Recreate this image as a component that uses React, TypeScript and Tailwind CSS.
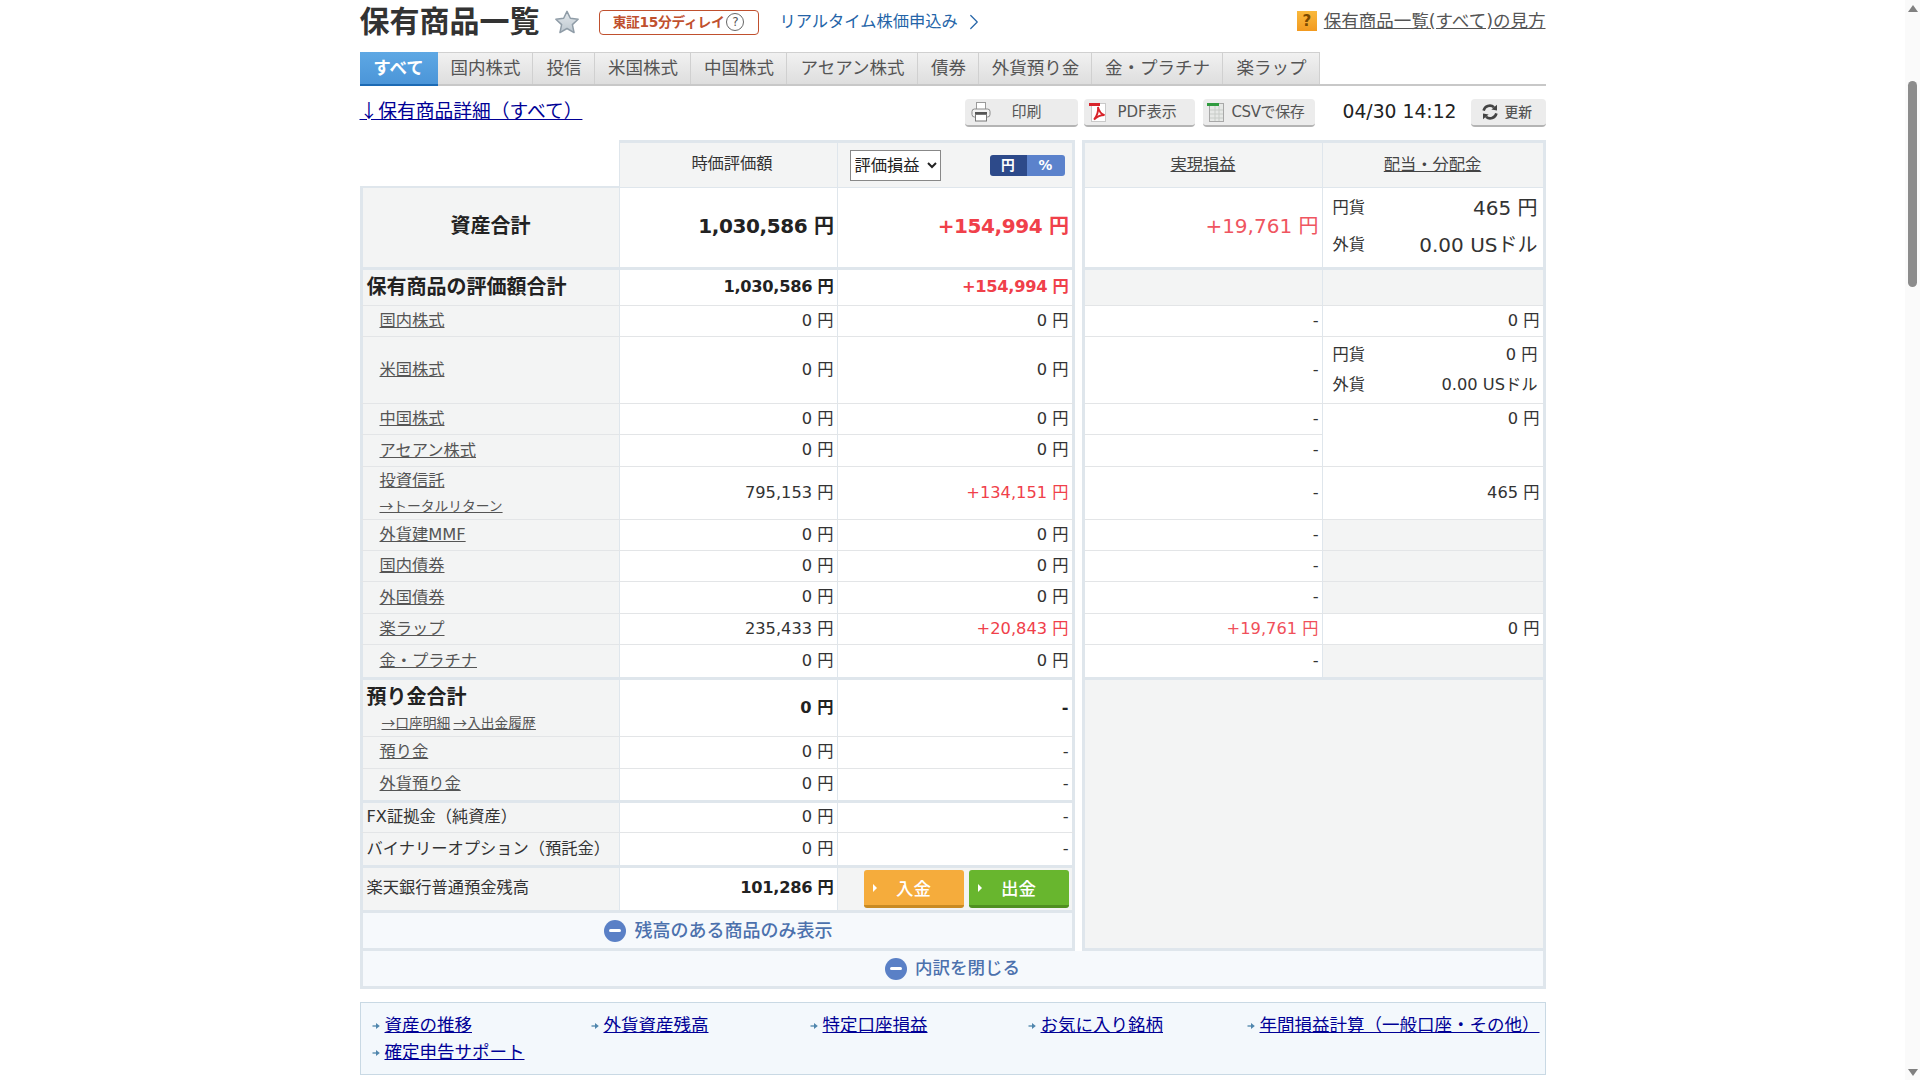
import React from "react";
import { ChevronRight } from "lucide-react";

// Data
const tabs = [
  { name: "すべて", width: "w-[78px]" },
  { name: "国内株式", width: "w-[95px]" },
  { name: "投信", width: "w-[62px]" },
  { name: "米国株式", width: "w-[96px]" },
  { name: "中国株式", width: "w-[96px]" },
  { name: "アセアン株式", width: "w-[131px]" },
  { name: "債券", width: "w-[61px]" },
  { name: "外貨預り金", width: "w-[113px]" },
  { name: "金・プラチナ", width: "w-[131px]" },
  { name: "楽ラップ", width: "w-[97px]" },
];

type HoldingRow = { label: string; height: string; value: string; loss: string; red?: boolean; end?: boolean };

const holdings: HoldingRow[] = [
  { label: "国内株式", height: "h-[31px]", value: "0 円", loss: "0 円" },
  { label: "米国株式", height: "h-[67px]", value: "0 円", loss: "0 円" },
  { label: "中国株式", height: "h-[31px]", value: "0 円", loss: "0 円" },
  { label: "アセアン株式", height: "h-[32px]", value: "0 円", loss: "0 円" },
  { label: "投資信託", height: "h-[53px]", value: "795,153 円", loss: "+134,151 円", red: true },
  { label: "外貨建MMF", height: "h-[31px]", value: "0 円", loss: "0 円" },
  { label: "国内債券", height: "h-[31px]", value: "0 円", loss: "0 円" },
  { label: "外国債券", height: "h-[32px]", value: "0 円", loss: "0 円" },
  { label: "楽ラップ", height: "h-[31px]", value: "235,433 円", loss: "+20,843 円", red: true },
  { label: "金・プラチナ", height: "h-[35px]", value: "0 円", loss: "0 円", end: true },
];

const footerLinks = ["資産の推移", "外貨資産残高", "特定口座損益", "お気に入り銘柄", "年間損益計算（一般口座・その他）", "確定申告サポート"];

const band = "border-[#dfe6ec]";
const gray = "bg-[#f3f4f4]";
const cjk = "font-['Noto_Sans_CJK_JP',sans-serif]";

const StarIcon = () => (
  <svg width="26" height="26" viewBox="0 0 28 28">
    <defs>
      <linearGradient id="star" x1="0" y1="0" x2="0" y2="1">
        <stop offset="0" stopColor="#e4e9ed" />
        <stop offset="1" stopColor="#bcc6ce" />
      </linearGradient>
    </defs>
    <polygon
      points="14,2.5 17.6,10 26,11 19.8,16.8 21.6,25.4 14,21 6.4,25.4 8.2,16.8 2,11 10.4,10"
      fill="url(#star)"
      stroke="#8f9ca7"
      strokeWidth="1.6"
      strokeLinejoin="round"
    />
  </svg>
);

const PrinterIcon = () => (
  <svg width="20" height="22" viewBox="0 0 20 22">
    <rect x="5.5" y="1.5" width="9" height="7" fill="#fff" stroke="#9a9a9a" />
    <rect x="1" y="8" width="18" height="8" rx="2.5" fill="#f2f2f2" stroke="#8a8a8a" />
    <rect x="4" y="11" width="12" height="2.5" fill="#555" />
    <rect x="4.5" y="13.5" width="11" height="6.5" fill="#fff" stroke="#777" />
  </svg>
);

const PdfIcon = () => (
  <svg width="18" height="22" viewBox="0 0 18 22">
    <rect x="2.5" y="2.5" width="14" height="18" fill="#fff" stroke="#c9c9c9" />
    <rect x="0" y="2" width="11" height="3" fill="#d8232a" />
    <path d="M5 18.5 C8 15 9.5 11 9 6 C10 10.5 12 13 15.5 14 C11.5 14 8 15.5 5 18.5 Z" fill="none" stroke="#d8232a" strokeWidth="1.8" />
  </svg>
);

const CsvIcon = () => (
  <svg width="18" height="22" viewBox="0 0 18 22">
    <rect x="2.5" y="2.5" width="14" height="18" fill="#e6e8e6" stroke="#a8a8a8" />
    <rect x="0" y="2" width="12" height="3" fill="#2f9b3f" />
    <path d="M3 9h13M3 13h13M3 17h13M8 5v15M12 5v15" stroke="#c8ccc8" strokeWidth="1" />
  </svg>
);

const RefreshIcon = () => (
  <svg width="18" height="18" viewBox="0 0 18 18">
    <g fill="none" stroke="#444" strokeWidth="2.6">
      <path d="M2.6 7.6 A6.4 6.4 0 0 1 13 4.2" />
      <path d="M15.4 10.4 A6.4 6.4 0 0 1 5 13.8" />
    </g>
    <polygon points="16,1.8 16,7.6 10.4,6.6" fill="#444" />
    <polygon points="2,16.2 2,10.4 7.6,11.4" fill="#444" />
  </svg>
);

const LinkArrow = () => (
  <svg width="8" height="8" viewBox="0 0 8 8" className="mr-[5px] shrink-0">
    <path d="M0.5 4h4.5" stroke="#6c9ab8" strokeWidth="1.6" />
    <polygon points="4,1 7.8,4 4,7" fill="#4f86ad" />
  </svg>
);

const MinusCircle = () => (
  <span className="w-[22px] h-[22px] rounded-full bg-[#5a80c6] flex items-center justify-center">
    <span className="w-[12px] h-[3px] bg-white rounded-sm" />
  </span>
);

const ToolButton = ({ width, children }: { width: string; children: React.ReactNode }) => (
  <button
    className={`${width} h-[28px] flex items-center rounded-[4px] border-b-[2px] border-[#b4b4b4] bg-[#ececec] text-[15px] text-[#555]`}
  >
    {children}
  </button>
);

const SubLabel = ({ row }: { row: HoldingRow }) => (
  <div className="flex flex-col pl-[17px] text-[16.25px] text-[#555] leading-[24px]">
    <a className="underline">{row.label}</a>
    {row.label === "投資信託" && <a className={`underline text-[13.75px] ${cjk}`}>→トータルリターン</a>}
  </div>
);

// One row of the left half: label, market value, gain or loss
const LeftRow = ({
  height,
  label,
  value,
  loss,
  labelClass = "",
  cellClass = "text-[16.25px] text-[#333]",
  lossClass = "",
  bandBottom = false,
}: {
  height: string;
  label: React.ReactNode;
  value: React.ReactNode;
  loss: React.ReactNode;
  labelClass?: string;
  cellClass?: string;
  lossClass?: string;
  bandBottom?: boolean;
}) => (
  <div className={`${height} flex border-l-[3px] border-r-[3px] ${band} ${bandBottom ? "border-b-[3px]" : "border-b border-b-[#e3e5e7]"}`}>
    <div className={`w-[256px] flex items-center ${gray} ${labelClass}`}>{label}</div>
    <div className={`w-[218px] flex items-center justify-end pr-[3px] border-l ${band} ${cellClass}`}>{value}</div>
    <div className={`flex-1 flex items-center justify-end pr-[3px] border-l ${band} ${cellClass} ${lossClass}`}>{loss}</div>
  </div>
);

const RightCell = ({ children, className = "" }: { children?: React.ReactNode; className?: string }) => (
  <div className={`flex items-center justify-end pr-[3px] text-[16.25px] text-[#333] ${className}`}>{children}</div>
);

const CurrencyLine = ({ name, amount, big }: { name: string; amount: string; big?: boolean }) => (
  <div className="flex items-center justify-between pl-[10px] pr-[5px]">
    <span className="text-[16.25px] text-[#333]">{name}</span>
    <span className={big ? "text-[20px] text-[#333]" : "text-[16.25px] text-[#333]"}>{amount}</span>
  </div>
);

const App = () => {
  return (
    <div className="flex h-screen overflow-hidden bg-white font-['DejaVu_Sans','Noto_Sans_CJK_JP',sans-serif]">
      <div className="flex-1 min-w-0">
        <div className="w-[1186px] mx-auto">
          {/* Title */}
          <div className="h-[52px] flex items-start justify-between">
            <div className="flex items-center h-[44px]">
              <h1 className="text-[30px] font-bold text-[#333] leading-none">保有商品一覧</h1>
              <span className="ml-[14px] flex">
                <StarIcon />
              </span>
              <span className="ml-[19px] w-[160px] h-[25px] flex items-center justify-center gap-[2px] rounded-[4px] border border-[#c0502e] text-[13.75px] font-bold text-[#c0502e] tracking-[-0.3px]">
                東証15分ディレイ
                <span className="w-[18px] h-[18px] rounded-full border-[1.5px] border-[#666] flex items-center justify-center text-[12px] font-normal text-[#555]">?</span>
              </span>
              <a className="ml-[21px] text-[16.25px] text-[#2464a8]">リアルタイム株価申込み</a>
              <ChevronRight className="ml-[3px] w-[26px] h-[26px] text-[#2464a8]" strokeWidth={1.1} />
            </div>
            <div className="flex items-center h-[42px]">
              <span className="w-[20px] h-[20px] bg-linear-to-b from-[#f9b93c] to-[#f29a1f] flex items-center justify-center text-[15px] font-bold text-[#7a4a00]">?</span>
              <a className="ml-[7px] text-[17.5px] text-[#555] underline">保有商品一覧(すべて)の見方</a>
            </div>
          </div>

          {/* Tabs */}
          <div className="flex h-[34px] border-b-[2px] border-[#c8c8c8]">
            {tabs.map((tab, idx) => (
              <div
                key={tab.name}
                className={
                  idx === 0
                    ? `${tab.width} flex items-center justify-center bg-linear-to-b from-[#5ea8e4] to-[#4b95d8] border-b-[2px] -mb-[2px] border-[#1c6ab4] text-[17.5px] font-bold text-white`
                    : `${tab.width} flex items-center justify-center pl-[2px] bg-linear-to-b from-[#f1f1f1] to-[#dedede] border-t border-r border-[#d0d0d0] text-[17.5px] text-[#555]`
                }
              >
                {tab.name}
              </div>
            ))}
          </div>

          {/* Toolbar */}
          <div className="h-[54px] flex items-start">
            <a className={`mt-[10px] text-[18.75px] leading-[28px] text-[#000096] underline ${cjk}`}>↓保有商品詳細（すべて）</a>
            <div className="ml-auto mt-[13px] flex items-center">
              <ToolButton width="w-[113px]">
                <span className="ml-[6px] flex"><PrinterIcon /></span>
                <span className="ml-[21px]">印刷</span>
              </ToolButton>
              <span className="w-[6px]" />
              <ToolButton width="w-[111px]">
                <span className="ml-[5px] flex"><PdfIcon /></span>
                <span className="ml-[11px]">PDF表示</span>
              </ToolButton>
              <span className="w-[8px]" />
              <ToolButton width="w-[112px]">
                <span className="ml-[4px] flex"><CsvIcon /></span>
                <span className="ml-[7px] tracking-[-0.4px]">CSVで保存</span>
              </ToolButton>
              <span className="w-[28px] " />
              <span className="w-[115px] text-[18.75px] leading-[24px] -mt-[3px] text-[#222] whitespace-nowrap">04/30 14:12</span>
              <span className="w-[13px]" />
              <ToolButton width="w-[75px]">
                <span className="ml-[10px] flex"><RefreshIcon /></span>
                <span className="ml-[6px] text-[13.75px] font-medium">更新</span>
              </ToolButton>
            </div>
          </div>

          {/* Main table */}
          <div className="flex">
            <div className="w-[715px] flex flex-col">
              {/* Header */}
              <div className="h-[48px] flex">
                <div className={`w-[259px] border-b-[2px] ${band}`} />
                <div className={`flex-1 flex border-t-[3px] border-r-[3px] border-b ${band} ${gray}`}>
                  <div className={`w-[218px] flex items-center justify-center pl-[8px] pb-[1px] border-l ${band} text-[16.25px] text-[#333]`}>時価評価額</div>
                  <div className={`flex-1 flex items-center border-l ${band} pl-[12px]`}>
                    <select className="w-[91px] h-[31px] border border-[#888] bg-white text-[16.25px] text-[#222]">
                      <option>評価損益</option>
                    </select>
                    <div className="ml-[49px] w-[75px] h-[21px] flex rounded-[3px] overflow-hidden text-[13.75px] font-bold text-white">
                      <span className="w-[37px] flex items-center justify-center bg-[#2d4a8a]">円</span>
                      <span className="flex-1 flex items-center justify-center bg-[#5b82cc]">%</span>
                    </div>
                  </div>
                </div>
              </div>

              <LeftRow
                height="h-[82px]"
                bandBottom
                label={<span className="w-full text-center pb-[3px] text-[20px] font-bold text-[#222]">資産合計</span>}
                value={<span className="pb-[4px]">1,030,586 円</span>}
                loss={<span className="pb-[4px]">+154,994 円</span>}
                cellClass="text-[20px] font-bold text-[#222] tracking-[-0.4px]"
                lossClass="text-[#f0404a]"
              />
              <LeftRow
                height="h-[36px]"
                label={<span className="pl-[4px] pb-[2px] text-[20px] font-bold text-[#222]">保有商品の評価額合計</span>}
                value="1,030,586 円"
                loss="+154,994 円"
                cellClass="text-[16.25px] font-bold text-[#222] tracking-[-0.3px]"
                lossClass="text-[#f0404a]"
              />
              {holdings.map((row) => (
                <LeftRow
                  key={row.label}
                  height={row.height}
                  bandBottom={row.end}
                  label={<SubLabel row={row} />}
                  value={row.value}
                  loss={row.loss}
                  lossClass={row.red ? "text-[#f0404a]" : ""}
                />
              ))}
              <LeftRow
                height="h-[57px]"
                label={
                  <div className="pl-[4px] flex flex-col">
                    <span className="text-[20px] font-bold text-[#222] leading-[30px] -mt-[2px]">預り金合計</span>
                    <span className={`pl-[15px] text-[13.75px] text-[#555] leading-[20px] ${cjk}`}>
                      <a className="underline">→口座明細</a> <a className="underline">→入出金履歴</a>
                    </span>
                  </div>
                }
                value="0 円"
                loss="-"
                cellClass="text-[16.25px] font-bold text-[#222]"
              />
              <LeftRow height="h-[32px]" label={<a className="pl-[17px] text-[16.25px] text-[#555] underline">預り金</a>} value="0 円" loss="-" />
              <LeftRow height="h-[34px]" bandBottom label={<a className="pl-[17px] text-[16.25px] text-[#555] underline">外貨預り金</a>} value="0 円" loss="-" />
              <LeftRow height="h-[30px]" label={<span className="pl-[4px] text-[16.25px] text-[#333]">FX証拠金（純資産）</span>} value="0 円" loss="-" />
              <LeftRow height="h-[35px]" bandBottom label={<span className="pl-[4px] text-[16.25px] text-[#333]">バイナリーオプション（預託金）</span>} value="0 円" loss="-" />

              {/* Bank balance */}
              <div className={`h-[45px] flex border-l-[3px] border-r-[3px] border-b-[3px] ${band}`}>
                <div className={`w-[256px] flex items-center pl-[4px] pb-[2px] ${gray} text-[16.25px] text-[#333]`}>楽天銀行普通預金残高</div>
                <div className={`w-[218px] flex items-center justify-end pr-[3px] pb-[2px] border-l ${band} text-[16.25px] font-bold text-[#222] tracking-[-0.3px]`}>101,286 円</div>
                <div className={`flex-1 flex items-center justify-end gap-[5px] pr-[3px] border-l ${band} ${gray}`}>
                  <button className="relative w-[100px] h-[38px] pt-[3px] rounded-[3px] border-b-[3px] border-[#c98a22] bg-[#f5ac3c] text-[17.5px] font-medium text-white">
                    <span className="absolute left-[9px] top-[14px] border-y-[4px] border-l-[4px] border-y-transparent border-l-white" />
                    入金
                  </button>
                  <button className="relative w-[100px] h-[38px] pt-[3px] rounded-[3px] border-b-[3px] border-[#4f9020] bg-[#68b62e] text-[17.5px] font-medium text-white">
                    <span className="absolute left-[9px] top-[14px] border-y-[4px] border-l-[4px] border-y-transparent border-l-white" />
                    出金
                  </button>
                </div>
              </div>
              <div className={`h-[38px] flex items-center justify-center gap-[9px] pl-[2px] border-l-[3px] border-r-[3px] border-b-[3px] ${band} bg-[#f6f9fc] text-[18px] font-medium text-[#4c71ad]`}>
                <MinusCircle />
                残高のある商品のみ表示
              </div>
            </div>

            <div className="w-[7px]" />

            {/* Right half */}
            <div className="w-[464px] flex flex-col">
              <div className={`grid grid-cols-[237px_1fr] grid-rows-[48px_82px_36px_31px_67px_31px_32px_53px_31px_31px_32px_31px_35px] border-l-[3px] border-r-[3px] ${band}`}>
                <div className={`flex items-center justify-center border-t-[3px] border-b ${band} ${gray} text-[16.25px] text-[#444]`}>
                  <a className="underline">実現損益</a>
                </div>
                <div className={`flex items-center justify-center border-t-[3px] border-b border-l ${band} ${gray} text-[16.25px] text-[#444]`}>
                  <a className="underline">配当・分配金</a>
                </div>

                <RightCell className={`border-b-[3px] pb-[4px] ${band} text-[20px]! text-[#ef5560]!`}>+19,761 円</RightCell>
                <div className={`flex flex-col justify-center gap-[7px] pb-[2px] border-l border-b-[3px] ${band}`}>
                  <CurrencyLine name="円貨" amount="465 円" big />
                  <CurrencyLine name="外貨" amount="0.00 USドル" big />
                </div>

                <div className={`border-b border-b-[#e3e5e7] ${gray}`} />
                <div className={`border-l border-b ${band} border-b-[#e3e5e7] ${gray}`} />

                <RightCell className="border-b border-[#e3e5e7]">-</RightCell>
                <RightCell className={`border-l border-b ${band} border-b-[#e3e5e7]`}>0 円</RightCell>

                <RightCell className="border-b border-[#e3e5e7]">-</RightCell>
                <div className={`flex flex-col justify-center gap-[6px] border-l border-b ${band} border-b-[#e3e5e7]`}>
                  <CurrencyLine name="円貨" amount="0 円" />
                  <CurrencyLine name="外貨" amount="0.00 USドル" />
                </div>

                <RightCell className="border-b border-[#e3e5e7]">-</RightCell>
                <div className={`row-span-2 flex justify-end pr-[3px] pt-[3px] border-l border-b ${band} border-b-[#e3e5e7] text-[16.25px] text-[#333]`}>0 円</div>
                <RightCell className="border-b border-[#e3e5e7]">-</RightCell>

                <RightCell className="border-b border-[#e3e5e7]">-</RightCell>
                <RightCell className={`border-l border-b ${band} border-b-[#e3e5e7]`}>465 円</RightCell>

                <RightCell className="border-b border-[#e3e5e7]">-</RightCell>
                <div className={`border-l border-b ${band} border-b-[#e3e5e7] ${gray}`} />

                <RightCell className="border-b border-[#e3e5e7]">-</RightCell>
                <div className={`border-l border-b ${band} border-b-[#e3e5e7] ${gray}`} />

                <RightCell className="border-b border-[#e3e5e7]">-</RightCell>
                <div className={`border-l border-b ${band} border-b-[#e3e5e7] ${gray}`} />

                <RightCell className="border-b border-[#e3e5e7] text-[#f0505a]!">+19,761 円</RightCell>
                <RightCell className={`border-l border-b ${band} border-b-[#e3e5e7]`}>0 円</RightCell>

                <RightCell className={`border-b-[3px] ${band}`}>-</RightCell>
                <div className={`border-l border-b-[3px] ${band} ${gray}`} />
              </div>
              <div className={`flex-1 border-l-[3px] border-r-[3px] border-b-[3px] ${band} ${gray}`} />
            </div>
          </div>

          <div className={`h-[38px] flex items-center justify-center gap-[8px] border-l-[3px] border-r-[3px] border-b-[3px] ${band} bg-[#f6f9fc] text-[17.5px] font-medium text-[#4c71ad]`}>
            <MinusCircle />
            内訳を閉じる
          </div>

          {/* Footer links */}
          <div className="mt-[13px] h-[73px] border border-[#c9d9e4] bg-[#f3f8fc] pl-[11px] pt-[9px] grid grid-cols-[219px_219px_218px_219px_1fr] auto-rows-[27px] items-center">
            {footerLinks.map((link) => (
              <div key={link} className="flex items-center whitespace-nowrap">
                <LinkArrow />
                <a className="text-[17.5px] text-[#000096] underline">{link}</a>
              </div>
            ))}
          </div>
        </div>
      </div>

      {/* Scrollbar */}
      <div className="w-[15px] bg-[#fafafa] flex flex-col items-center">
        <span className="mt-[5px] border-x-[5px] border-b-[7px] border-x-transparent border-b-[#808080]" />
        <span className="mt-[69px] w-[9px] h-[206px] rounded-full bg-[#8c8c8c]" />
        <span className="mt-auto mb-[4px] border-x-[5px] border-t-[7px] border-x-transparent border-t-[#808080]" />
      </div>
    </div>
  );
};

export default App;
